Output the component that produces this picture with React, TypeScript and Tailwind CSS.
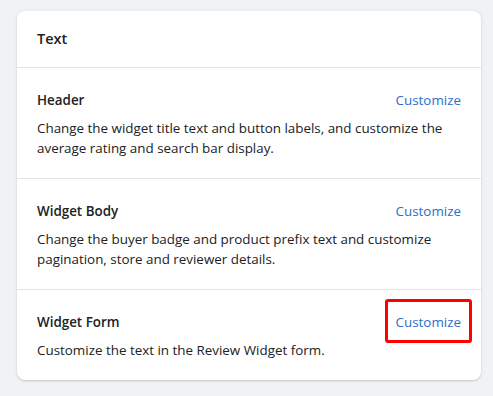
import React from 'react';

const sections = [
  {
    title: 'Header',
    body: 'Change the widget title text and button labels, and customize the average rating and search bar display.',
  },
  {
    title: 'Widget Body',
    body: 'Change the buyer badge and product prefix text and customize pagination, store and reviewer details.',
  },
  {
    title: 'Widget Form',
    body: 'Customize the text in the Review Widget form.',
    highlight: true,
  },
];

const App = () => {
  return (
    <div
      className="min-h-[396px] w-[493px] bg-[#f1f2f3] pl-[17px] pr-[12px] pt-[11px] text-[#202223]"
      style={{ fontFamily: '"Open Sans", sans-serif' }}
    >
      <div className="rounded-lg bg-white shadow-[0_0_5px_rgba(23,24,24,0.05),0_1px_2px_rgba(0,0,0,0.15)]">
        <div className="flex h-[56px] items-center px-5">
          <h2 className="text-[14.5px] font-semibold">Text</h2>
        </div>
        {sections.map((s) => (
          <div key={s.title} className="border-t border-[#e1e3e5] px-5 pt-[19px] pb-[20px]">
            <div className="flex items-center justify-between leading-6">
              <h3 className="text-[13.4px] font-semibold">{s.title}</h3>
              <div className="relative">
                <a href="#" className="text-[13.4px] text-[#2c6ecb]">
                  Customize
                </a>
                {s.highlight && (
                  <span className="absolute -left-[11px] -right-[11px] -top-[10px] -bottom-[9px] rounded-[3px] border-[3px] border-[#ff0000]" />
                )}
              </div>
            </div>
            <p className="mt-[6px] text-[13.4px] leading-5">{s.body}</p>
          </div>
        ))}
      </div>
    </div>
  );
};

export default App;
